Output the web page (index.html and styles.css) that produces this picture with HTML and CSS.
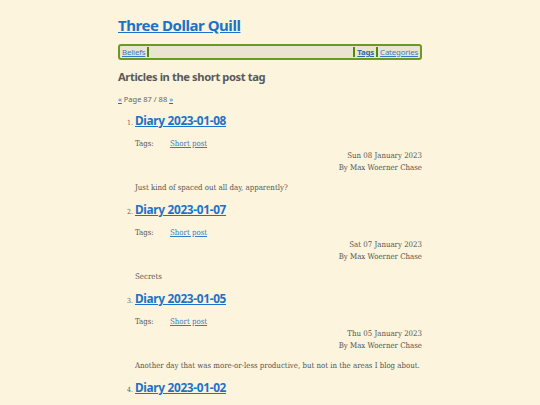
FILE: index.html
```html
<!DOCTYPE html>
<html>
<head>
<meta charset="utf-8">
<link rel="stylesheet" href="styles.css">
</head>
<body>
<div class="page">
  <h1 class="site-title"><a href="#">Three Dollar Quill</a></h1>
  <nav class="nav">
    <div class="nav-left"><a href="#">Beliefs</a><span class="sep"></span></div>
    <div class="nav-right"><span class="sep"></span><a href="#" class="current">Tags</a><span class="sep"></span><a href="#">Categories</a></div>
  </nav>
  <h2 class="heading">Articles in the short post tag</h2>
  <p class="pager"><a href="#">«</a> Page 87 / 88 <a href="#">»</a></p>
  <ol class="articles">
    <li class="article">
      <h3 class="a-title"><a href="#">Diary 2023-01-08</a></h3>
      <div class="tags"><span class="tags-label">Tags:</span><a href="#">Short post</a></div>
      <div class="meta">Sun 08 January 2023<br>By Max Woerner Chase</div>
      <p class="summary">Just kind of spaced out all day, apparently?</p>
    </li>
    <li class="article">
      <h3 class="a-title"><a href="#">Diary 2023-01-07</a></h3>
      <div class="tags"><span class="tags-label">Tags:</span><a href="#">Short post</a></div>
      <div class="meta">Sat 07 January 2023<br>By Max Woerner Chase</div>
      <p class="summary">Secrets</p>
    </li>
    <li class="article">
      <h3 class="a-title"><a href="#">Diary 2023-01-05</a></h3>
      <div class="tags"><span class="tags-label">Tags:</span><a href="#">Short post</a></div>
      <div class="meta">Thu 05 January 2023<br>By Max Woerner Chase</div>
      <p class="summary">Another day that was more-or-less productive, but not in the areas I blog about.</p>
    </li>
    <li class="article">
      <h3 class="a-title"><a href="#">Diary 2023-01-02</a></h3>
      <div class="tags"><span class="tags-label">Tags:</span><a href="#">Short post</a></div>
      <div class="meta">Mon 02 January 2023<br>By Max Woerner Chase</div>
      <p class="summary">Nothing much.</p>
    </li>
  </ol>
</div>
</body>
</html>
```
FILE: styles.css
```css
html, body {
  margin: 0;
  padding: 0;
  background: #fcf4dc;
}
body {
  font-family: "DejaVu Serif Condensed", "DejaVu Serif", serif;
  color: #555;
}
a { color: #1a6fc4; }
.page {
  width: 304px;
  margin: 0 auto;
  padding-top: 14px;
}
.site-title {
  margin: 0;
  font-family: "Noto Sans", sans-serif;
  font-size: 15px;
  letter-spacing: -0.45px;
  font-weight: bold;
  line-height: 22px;
}
.site-title a { color: #1a73c8; }
.nav {
  margin-top: 8px;
  display: flex;
  justify-content: space-between;
  align-items: center;
  background: #ebe4d0;
  border: 2px solid #6a9a23;
  border-radius: 3px;
  height: 12px;
  font-family: "Noto Sans", sans-serif;
  font-size: 7.8px;
  letter-spacing: -0.15px;
  padding: 0 2px;
}
.nav a { color: #3a7bc4; }
.nav a.current { font-weight: bold; color: #2c6aa8; }
.nav-left, .nav-right { display: flex; align-items: center; gap: 2px; }
.sep {
  display: inline-block;
  width: 2px;
  height: 10px;
  background: #4c8a10;
}
.heading {
  margin: 8px 0 0;
  font-family: "Noto Sans", sans-serif;
  font-size: 11.2px;
  letter-spacing: -0.4px;
  font-weight: bold;
  color: #5a5a5a;
  line-height: 18px;
}
.pager {
  margin: 8px 0 0;
  font-family: "Noto Sans", sans-serif;
  font-size: 7.5px;
  line-height: 10px;
  color: #666;
}
.articles {
  margin: 6px 0 0;
  padding-left: 17px;
}
.article::marker {
  font-family: "DejaVu Serif Condensed", serif;
  font-size: 7px;
  color: #666;
}
.a-title {
  margin: 0;
  font-family: "Noto Sans", sans-serif;
  font-size: 11.8px;
  letter-spacing: -0.3px;
  font-weight: bold;
  line-height: 20px;
}
.a-title a { color: #1a73c8; }
.tags {
  margin-top: 8px;
  font-size: 7.8px;
  line-height: 11px;
  display: flex;
}
.tags-label { width: 35px; }
.tags a { color: #3a7bc4; }
.meta {
  text-align: right;
  font-size: 7.8px;
  line-height: 12px;
  margin-top: 1px;
}
.summary {
  margin: 8px 0 5px;
  font-size: 7.8px;
  line-height: 12px;
}
```
